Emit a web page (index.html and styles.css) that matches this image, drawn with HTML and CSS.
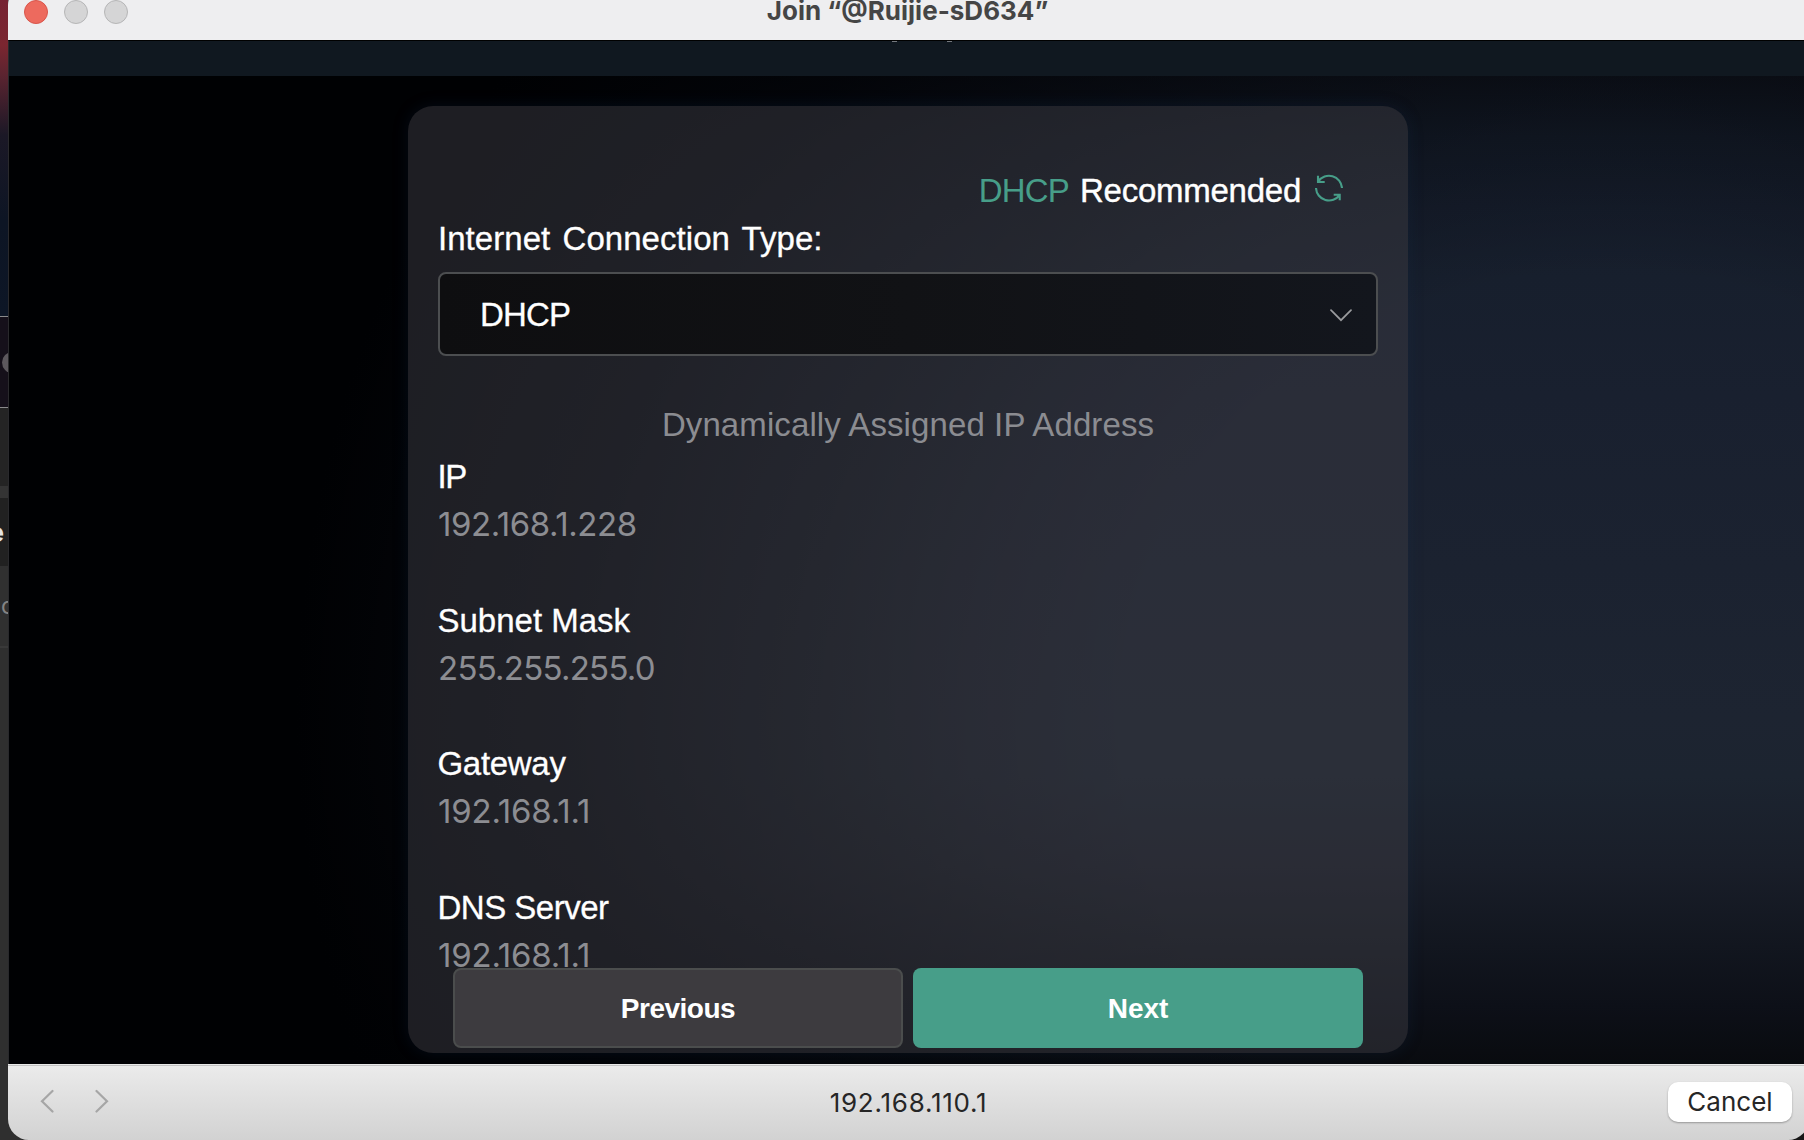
FILE: index.html
```
<!DOCTYPE html>
<html lang="en">
<head>
<meta charset="utf-8">
<title>Join “@Ruijie-sD634”</title>
<link rel="stylesheet" href="styles.css">
</head>
<body>
<aside class="desktop">
  <div class="wallpaper"></div>
  <div class="row player"><i class="knob"></i></div>
  <div class="row panel"></div>
  <div class="row divider"></div>
  <div class="row item"><span>e</span></div>
  <div class="row sub"><span>c</span></div>
  <div class="row rest"></div>
</aside>
<main class="window">
  <header class="titlebar">
    <div class="lights"><i class="light close"></i><i class="light"></i><i class="light"></i></div>
    <h1>Join “@Ruijie-sD634”</h1>
  </header>
  <section class="portal">
    <div class="banner"><i></i><i></i></div>
    <div class="stage">
      <div class="card">
        <div class="recommend">
          <span class="accent">DHCP</span><span class="text">Recommended</span>
          <svg class="refresh" viewBox="0 0 28 28" width="28" height="28"><path d="M27 14A13 13 0 0 0 3.3 7.4M3 1.7V8H9.7M1 14A13 13 0 0 0 24.7 20.9M24.7 26.3V20.7H18.7"/></svg>
        </div>
        <div class="label type">Internet Connection Type:</div>
        <div class="select"><span>DHCP</span>
          <svg viewBox="0 0 22 13" width="22" height="13"><path d="M1 1.2L11 11.2L21 1.2"/></svg>
        </div>
        <div class="caption">Dynamically Assigned IP Address</div>
        <dl>
          <dt class="ip">IP</dt><dd class="addr">192.168.1.228</dd>
          <dt>Subnet Mask</dt><dd class="mask">255.255.255.0</dd>
          <dt class="gateway">Gateway</dt><dd>192.168.1.1</dd>
          <dt class="dns">DNS Server</dt><dd>192.168.1.1</dd>
        </dl>
        <div class="actions"><button class="prev">Previous</button><button class="next">Next</button></div>
      </div>
    </div>
  </section>
  <footer class="bottombar">
    <nav>
      <svg viewBox="0 0 14 24" width="14" height="24"><path d="M12.5 2L2 12.2L12.5 22.5"/></svg>
      <svg viewBox="0 0 14 24" width="14" height="24"><path d="M1.5 2L12 12.2L1.5 22.5"/></svg>
    </nav>
    <span class="address">192.168.110.1</span>
    <button class="cancel">Cancel</button>
  </footer>
</main>
</body>
</html>
```
FILE: styles.css
```
* { box-sizing: border-box; }
body {
  margin: 0;
  width: 1804px;
  height: 1140px;
  overflow: hidden;
  display: flex;
  background: linear-gradient(90deg, #2f2f2f 30px, #161616 60px);
  font-family: "Liberation Sans", Arial, sans-serif;
}
h1, dl, dd { margin: 0; }
button { border: 0; padding: 0; font: inherit; }
svg { fill: none; flex: none; stroke-linecap: round; }

/* desktop behind the window */
.desktop { width: 8px; flex: none; overflow: hidden; }
.wallpaper { height: 316px; background: linear-gradient(#762333 0, #7b2630 45px, #5b2430 75px, #1b1826 135px, #0d1524 220px, #0d1626); }
.row { display: flex; align-items: center; overflow: hidden; }
.player { height: 92px; background: #15101a; border: solid #8a8a8c; border-width: 1px 0; }
.knob { width: 21px; height: 21px; margin-left: 2px; flex: none; border-radius: 50%; background: #5c585d; }
.panel { height: 78px; background: #242424; }
.divider { height: 12px; background: #343434; }
.item { height: 68px; background: #212121; color: #e4e4e4; font: 700 27px Inter, sans-serif; }
.item span { margin-left: -12px; }
.sub { height: 80px; background: #303030; color: #848484; font: 23px Inter, sans-serif; }
.sub span { margin-left: 1px; }
.rest { height: 494px; background: #2f2f2f; border-top: 2px solid #393939; }

.window {
  width: 1801px;
  height: 1156px;
  margin-top: -16px;
  flex: none;
  display: flex;
  flex-direction: column;
  border-radius: 21px;
  overflow: hidden;
}
.titlebar { height: 56px; display: grid; grid-template-columns: 1fr auto 1fr; align-items: center; background: #eeeef0; }
.lights { display: flex; gap: 16px; padding-left: 16px; }
.light { width: 24px; height: 24px; border-radius: 50%; background: #d5d5d6; border: 1px solid #b5b5b6; }
.close { background: #ed6a5e; border-color: #d8554b; }
h1 { font: 700 26px/32px Inter, sans-serif; color: #454545; margin: -3px 2px 0 0; }

.portal { height: 1024px; border-top: 1px solid #000; border-left: 1px solid #29292c; overflow: hidden; }
.banner { height: 35px; padding-left: 26px; display: flex; justify-content: center; gap: 50px; background: #101820; }
.banner i { width: 5px; height: 1px; background: #75797f; }
.stage {
  height: 988px;
  padding: 30px 0 0 399px;
  background:
    radial-gradient(ellipse 1340px 1220px at 1600px 640px, transparent 36%, rgba(0, 1, 4, .18) 48%, rgba(0, 1, 4, .5) 63%, rgba(0, 1, 4, .8) 78%, #000103 98%),
    linear-gradient(#0e121b 0, #121925 60px, #151c2a 130px, #171f2d 200px, #19202f 320px, #1b2230 490px, #1d2431 640px, #1c2430 700px, #191e29 790px, #12161f 870px, #0d1018 930px, #090b0f 988px);
}
.card {
  width: 1000px;
  height: 947px;
  padding: 61px 30px 0;
  border-radius: 25px;
  background: rgba(57, 58, 65, .52);
  box-shadow: 0 0 16px rgba(20, 50, 90, .22);
  color: #fff;
  font-size: 33px;
  line-height: 48px;
}
.recommend { height: 48px; display: flex; align-items: center; padding-right: 35px; justify-content: flex-end; }
.accent { color: #479e89; letter-spacing: -.8px; margin-right: 11px; }
.text { letter-spacing: -.25px; -webkit-text-stroke: .4px #fff; margin-right: 14px; }
.refresh { stroke: #479e89; stroke-width: 2.1; stroke-linecap: butt; margin-top: -7px; }
.label { -webkit-text-stroke: .3px #fff; word-spacing: 3px; letter-spacing: .05px; }
.select {
  height: 84px;
  width: 940px;
  margin-top: 9px;
  padding: 2px 26px 0 40px;
  display: flex;
  align-items: center;
  justify-content: space-between;
  border: 2px solid #4c4e50;
  border-radius: 8px;
  background: linear-gradient(90deg, #0e0e10, #111215 50%, #13161d);
  letter-spacing: -.8px;
  -webkit-text-stroke: .3px #fff;
}
.select svg { stroke: #9a9b9e; stroke-width: 1.7; margin-right: -2px; }
.caption { margin-top: 45px; color: #8b8c91; text-align: center; letter-spacing: .1px; }
dl { margin-top: 4px; }
dt { -webkit-text-stroke: .3px #fff; text-indent: -.5px; }
dd { color: #8c8d92; margin: -1px 0 48.7px; font: 33px/48px Inter, sans-serif; letter-spacing: -.2px; }
.ip { letter-spacing: -1.5px; }
.addr { letter-spacing: -.45px; }
.mask { letter-spacing: -.75px; }
.gateway { letter-spacing: -.3px; }
.dns { letter-spacing: -.5px; }
dl dd:last-child { margin-bottom: 0; }
.actions { position: relative; margin: -11px 15px 0; display: grid; grid-template-columns: 1fr 1fr; gap: 10px; }
.actions button { height: 80px; padding-top: 2px; border-radius: 8px; color: #fff; font-weight: 700; font-size: 28px; }
.actions .prev { background: #3d3b3f; border: 2px solid #4b4d4d; letter-spacing: -.5px; }
.actions .next { background: #479e89; letter-spacing: -.1px; }

.bottombar {
  height: 76px;
  display: grid;
  grid-template-columns: 1fr auto 1fr;
  align-items: center;
  border-top: 1px solid #e9e9e9;
  box-shadow: inset 0 1px #c3c3c3;
  background: linear-gradient(#ebebeb, #d2d2d2);
  font-family: Inter, sans-serif;
  font-size: 26px;
  color: #262626;
}
.bottombar nav { display: flex; gap: 41px; padding-left: 32px; margin-top: -3px; }
.bottombar nav svg { stroke: #a6a6a6; stroke-width: 2.2; }
.address { letter-spacing: .75px; }
.cancel { justify-self: end; width: 124px; height: 40px; margin: -2px 17px 0 0; padding-bottom: 1px; border-radius: 10px; background: #fff; color: #262626; box-shadow: 0 1px 2px rgba(0, 0, 0, .3); }
```
